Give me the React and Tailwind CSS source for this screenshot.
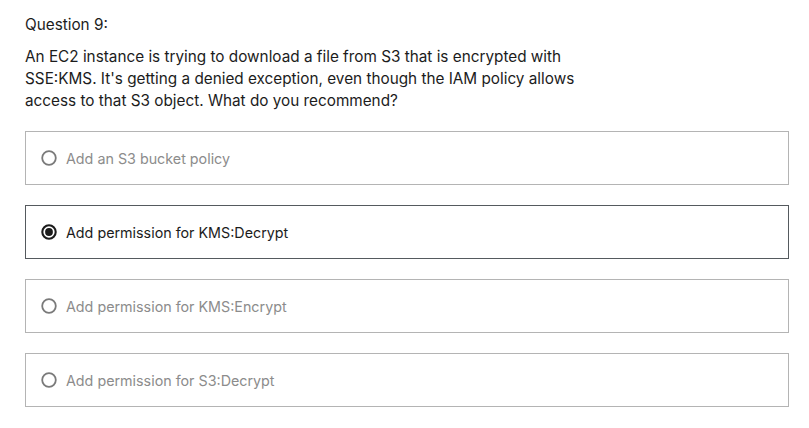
import React from "react";

const options = [
  { label: "Add an S3 bucket policy", selected: false },
  { label: "Add permission for KMS:Decrypt", selected: true },
  { label: "Add permission for KMS:Encrypt", selected: false },
  { label: "Add permission for S3:Decrypt", selected: false },
];

function Radio({ selected }) {
  return selected ? (
    <svg width="16" height="16" viewBox="0 0 16 16" className="shrink-0">
      <circle cx="8" cy="8" r="6.7" fill="none" stroke="#1b1b1b" strokeWidth="2.1" />
      <circle cx="8" cy="8" r="3.9" fill="#1b1b1b" />
    </svg>
  ) : (
    <svg width="16" height="16" viewBox="0 0 16 16" className="shrink-0">
      <circle cx="8" cy="8" r="6.8" fill="none" stroke="#7a7a7a" strokeWidth="1.8" />
    </svg>
  );
}

export default function App() {
  return (
    <div
      className="w-[809px] h-[428px] bg-white pl-[25px] pr-[20px] pt-[14px]"
      style={{ fontFamily: "Inter, 'Noto Sans', sans-serif" }}
    >
      <div className="text-[15.3px] leading-[22px] text-[#1c1c1c]">Question 9:</div>
      <p className="mt-[10px] w-[580px] text-[15.3px] leading-[22px] text-[#1c1c1c]">
        An EC2 instance is trying to download a file from S3 that is encrypted with
        <br />
        SSE:KMS. It's getting a denied exception, even though the IAM policy allows
        <br />
        access to that S3 object. What do you recommend?
      </p>
      <div className="mt-[19px] flex flex-col gap-[20px]">
        {options.map((o) => (
          <div
            key={o.label}
            className={
              o.selected
                ? "h-[54px] flex items-center gap-[9px] pl-[15px] border-[1.5px] border-[#555a5e]"
                : "h-[54px] flex items-center gap-[9px] pl-[15px] border-[1.5px] border-[#b4b4b4]"
            }
          >
            <Radio selected={o.selected} />
            <span
              className={
                o.selected
                  ? "pt-[2px] text-[14.3px] text-[#1c1c1c]"
                  : "pt-[2px] text-[14.3px] text-[#8c8c8c]"
              }
            >
              {o.label}
            </span>
          </div>
        ))}
      </div>
    </div>
  );
}
